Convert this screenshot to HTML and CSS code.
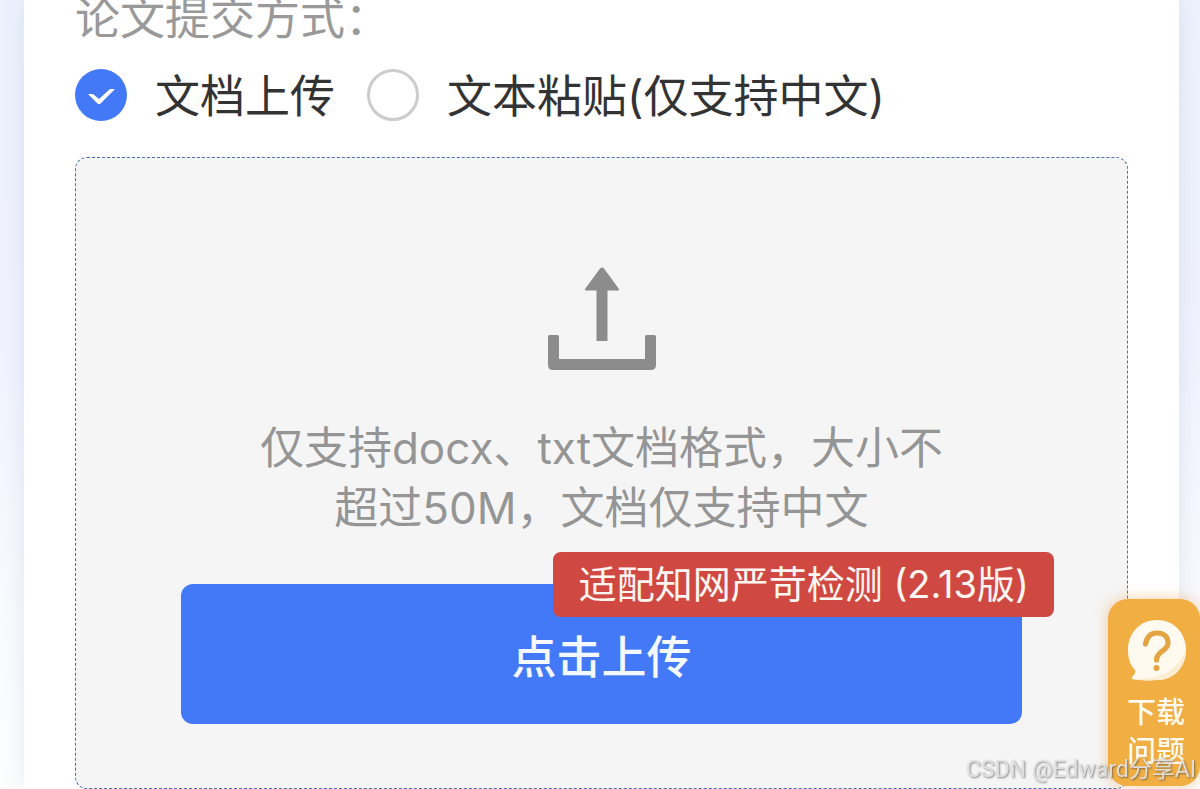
FILE: index.html
```html
<!DOCTYPE html>
<html lang="zh-CN">
<head>
<meta charset="utf-8">
<meta name="viewport" content="width=device-width, initial-scale=1">
<title>论文提交</title>
<link rel="stylesheet" href="styles.css">
</head>
<body>
<main class="card">
  <fieldset class="method">
    <legend class="method-title">论文提交方式：</legend>
    <div class="options">
      <label class="option"><input class="radio" type="radio" name="method" checked><span class="option-text">文档上传</span></label>
      <label class="option"><input class="radio" type="radio" name="method"><span class="option-text">文本粘贴(仅支持中文)</span></label>
    </div>
  </fieldset>
  <section class="dropzone">
    <svg class="upload-icon" viewBox="0 0 110 103" aria-hidden="true">
      <path d="M55 0.500Q56 0.500 57 1.500L72 22Q72.500 23.500 71 23.500H60.500V74H49.500V23.500H39Q37.500 23.500 38 22L53 1.500Q54 0.500 55 0.500Z"/>
      <path d="M2.500 68H10.500Q12 68 12 69.500V92H98V69.500Q98 68 99.500 68H107.500Q109 68 109 69.500V98Q109 103 104 103H6Q1 103 1 98V69.500Q1 68 2.500 68Z"/>
    </svg>
    <p class="hint">仅支持docx、txt文档格式，大小不超过50M，文档仅支持中文</p>
    <div class="upload">
      <button class="upload-button" type="button">点击上传</button>
      <span class="badge">适配知网严苛检测 (2.13版)</span>
    </div>
  </section>
</main>
<button class="help" type="button">
  <svg class="help-icon" viewBox="0 0 60 62" aria-hidden="true">
    <path fill="#fffaf0" d="M31 1C48 1 60 14 60 31S48 61 31 61C21 62 12 61 6 60Q5 59 7 57Q10 54 9 51C4 46 2 39 2 31C2 14 14 1 31 1Z"/>
    <path fill="#fbecd2" d="M60 30C60 48 48 61 31 61C21 62 12 61 6 60C33 61 52 53 60 30Z"/>
    <path d="M19.500 25C21 17 25 14 31 14C38 14 42 18 42 24C42 32 30.500 32 30.500 41" fill="none" stroke="#e3a443" stroke-width="5.200" stroke-linecap="round"/>
    <circle cx="30.500" cy="49" r="3" fill="#e3a443"/>
  </svg>
  <span>下载</span>
  <span>问题</span>
</button>
<div class="watermark">CSDN @Edward分享AI</div>
</body>
</html>
```
FILE: styles.css
```css
* {
  box-sizing: border-box;
}

body {
  margin: 0;
  min-height: 100vh;
  padding: 0 21px 0 24px;
  font-family: Inter, "Noto Sans CJK SC", sans-serif;
  background:
    linear-gradient(180deg, #edf2fd 0%, #f1f3fe 45%, #fafaff 75%, #fdfffe 100%);
}

.card {
  min-height: 100vh;
  padding: 0 51px;
  background: #fff;
  box-shadow: 0 0 24px rgba(60, 90, 130, 0.12);
}

.method {
  margin: 0;
  padding: 0;
  border: 0;
}

.method-title {
  padding: 0;
  font-size: 45px;
  line-height: 38px;
  color: #999;
}

.options {
  display: flex;
  gap: 32px;
  padding: 29px 0 34px;
}

.option {
  display: flex;
  align-items: center;
  gap: 28px;
  font-size: 45px;
  line-height: 52px;
  color: #333;
}

.option-text {
  padding-top: 4px;
}

.radio {
  appearance: none;
  flex: none;
  width: 52px;
  height: 52px;
  margin: 0;
  border: 3px solid #ccc;
  border-radius: 50%;
  background: #fff;
}

.radio:checked {
  border: 0;
  background: #4378f6;
}

.radio:checked::before {
  content: "";
  display: block;
  height: 52px;
  background: #fff;
  clip-path: polygon(13px 25px, 18px 25px, 24px 30px, 35px 20px, 40px 20px, 25px 35px, 23px 35px);
}

.dropzone {
  display: flex;
  flex-direction: column;
  align-items: center;
  padding: 109px 0 64px;
  border: 1px dashed #4a6fae;
  border-radius: 12px;
  background: #f5f5f5;
}

.upload-icon {
  width: 110px;
  height: 103px;
  fill: #8c8c8c;
}

.hint {
  max-width: 16em;
  margin: 48px 0 46px;
  font-size: 44px;
  line-height: 60px;
  text-align: center;
  color: #959595;
}

.upload {
  position: relative;
  width: 80%;
}

.upload-button {
  display: block;
  width: 100%;
  height: 140px;
  border: 0;
  border-radius: 12px;
  font: 500 45px Inter, "Noto Sans CJK SC", sans-serif;
  color: #f4f8ff;
  background: #4378f6;
}

.badge {
  position: absolute;
  top: -32px;
  right: -32px;
  padding: 0 25px 0 26px;
  border-radius: 8px;
  font-size: 38px;
  line-height: 65px;
  white-space: nowrap;
  color: #fff6f2;
  background: #cf4942;
}

.help {
  position: fixed;
  right: 0;
  bottom: 3px;
  display: flex;
  flex-direction: column;
  align-items: center;
  width: 92px;
  padding: 20px 0 15px 4px;
  border: 0;
  border-radius: 20px;
  font: 500 29px/39px Inter, "Noto Sans CJK SC", sans-serif;
  color: #fffaf0;
  background: #f0ae43;
  box-shadow: 0 0 14px rgba(240, 160, 70, 0.5);
}

.help-icon {
  width: 60px;
  height: 62px;
  margin-bottom: 12px;
}

.watermark {
  position: fixed;
  right: 4px;
  bottom: 3px;
  font: 23px/32px Roboto, "Noto Sans CJK SC", sans-serif;
  color: rgba(225, 225, 225, 0.95);
  text-shadow: 1px 1px 2px rgba(60, 60, 60, 0.6);
  pointer-events: none;
}
```
